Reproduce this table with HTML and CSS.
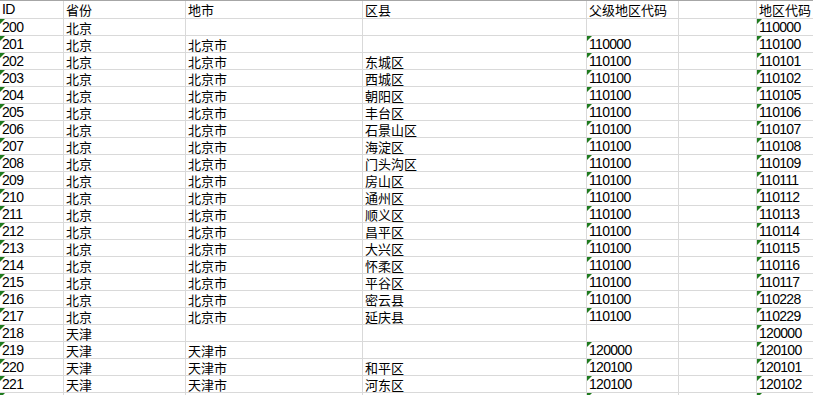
FILE: index.html
```html
<!DOCTYPE html>
<html lang="zh">
<head>
<meta charset="utf-8">
<title>地区代码</title>
<link rel="stylesheet" href="styles.css">
</head>
<body>
<div class="sheet">
  <div class="row head">
    <div class="c">ID</div><div class="c zh">省份</div><div class="c zh">地市</div><div class="c zh">区县</div><div class="c zh">父级地区代码</div><div class="c"></div><div class="c zh">地区代码</div>
  </div>
  <div class="row"><div class="c t">200</div><div class="c zh">北京</div><div class="c zh"></div><div class="c zh"></div><div class="c"></div><div class="c"></div><div class="c t">110000</div></div>
  <div class="row"><div class="c t">201</div><div class="c zh">北京</div><div class="c zh">北京市</div><div class="c zh"></div><div class="c t">110000</div><div class="c"></div><div class="c t">110100</div></div>
  <div class="row"><div class="c t">202</div><div class="c zh">北京</div><div class="c zh">北京市</div><div class="c zh">东城区</div><div class="c t">110100</div><div class="c"></div><div class="c t">110101</div></div>
  <div class="row"><div class="c t">203</div><div class="c zh">北京</div><div class="c zh">北京市</div><div class="c zh">西城区</div><div class="c t">110100</div><div class="c"></div><div class="c t">110102</div></div>
  <div class="row"><div class="c t">204</div><div class="c zh">北京</div><div class="c zh">北京市</div><div class="c zh">朝阳区</div><div class="c t">110100</div><div class="c"></div><div class="c t">110105</div></div>
  <div class="row"><div class="c t">205</div><div class="c zh">北京</div><div class="c zh">北京市</div><div class="c zh">丰台区</div><div class="c t">110100</div><div class="c"></div><div class="c t">110106</div></div>
  <div class="row"><div class="c t">206</div><div class="c zh">北京</div><div class="c zh">北京市</div><div class="c zh">石景山区</div><div class="c t">110100</div><div class="c"></div><div class="c t">110107</div></div>
  <div class="row"><div class="c t">207</div><div class="c zh">北京</div><div class="c zh">北京市</div><div class="c zh">海淀区</div><div class="c t">110100</div><div class="c"></div><div class="c t">110108</div></div>
  <div class="row"><div class="c t">208</div><div class="c zh">北京</div><div class="c zh">北京市</div><div class="c zh">门头沟区</div><div class="c t">110100</div><div class="c"></div><div class="c t">110109</div></div>
  <div class="row"><div class="c t">209</div><div class="c zh">北京</div><div class="c zh">北京市</div><div class="c zh">房山区</div><div class="c t">110100</div><div class="c"></div><div class="c t">110111</div></div>
  <div class="row"><div class="c t">210</div><div class="c zh">北京</div><div class="c zh">北京市</div><div class="c zh">通州区</div><div class="c t">110100</div><div class="c"></div><div class="c t">110112</div></div>
  <div class="row"><div class="c t">211</div><div class="c zh">北京</div><div class="c zh">北京市</div><div class="c zh">顺义区</div><div class="c t">110100</div><div class="c"></div><div class="c t">110113</div></div>
  <div class="row"><div class="c t">212</div><div class="c zh">北京</div><div class="c zh">北京市</div><div class="c zh">昌平区</div><div class="c t">110100</div><div class="c"></div><div class="c t">110114</div></div>
  <div class="row"><div class="c t">213</div><div class="c zh">北京</div><div class="c zh">北京市</div><div class="c zh">大兴区</div><div class="c t">110100</div><div class="c"></div><div class="c t">110115</div></div>
  <div class="row"><div class="c t">214</div><div class="c zh">北京</div><div class="c zh">北京市</div><div class="c zh">怀柔区</div><div class="c t">110100</div><div class="c"></div><div class="c t">110116</div></div>
  <div class="row"><div class="c t">215</div><div class="c zh">北京</div><div class="c zh">北京市</div><div class="c zh">平谷区</div><div class="c t">110100</div><div class="c"></div><div class="c t">110117</div></div>
  <div class="row"><div class="c t">216</div><div class="c zh">北京</div><div class="c zh">北京市</div><div class="c zh">密云县</div><div class="c t">110100</div><div class="c"></div><div class="c t">110228</div></div>
  <div class="row"><div class="c t">217</div><div class="c zh">北京</div><div class="c zh">北京市</div><div class="c zh">延庆县</div><div class="c t">110100</div><div class="c"></div><div class="c t">110229</div></div>
  <div class="row"><div class="c t">218</div><div class="c zh">天津</div><div class="c zh"></div><div class="c zh"></div><div class="c"></div><div class="c"></div><div class="c t">120000</div></div>
  <div class="row"><div class="c t">219</div><div class="c zh">天津</div><div class="c zh">天津市</div><div class="c zh"></div><div class="c t">120000</div><div class="c"></div><div class="c t">120100</div></div>
  <div class="row"><div class="c t">220</div><div class="c zh">天津</div><div class="c zh">天津市</div><div class="c zh">和平区</div><div class="c t">120100</div><div class="c"></div><div class="c t">120101</div></div>
  <div class="row"><div class="c t">221</div><div class="c zh">天津</div><div class="c zh">天津市</div><div class="c zh">河东区</div><div class="c t">120100</div><div class="c"></div><div class="c t">120102</div></div>
  <div class="row"><div class="c t">222</div><div class="c zh">天津</div><div class="c zh">天津市</div><div class="c zh">河西区</div><div class="c t">120100</div><div class="c"></div><div class="c t">120103</div></div>
</div>
</body>
</html>
```
FILE: styles.css
```css
html, body {
  margin: 0;
  background: #fff;
  overflow: hidden;
}

.sheet {
  border-top: 1px solid #a6a6a6;
  font-family: "Liberation Sans", Arial, sans-serif;
  font-size: 14px;
  letter-spacing: -0.7px;
  color: #000;
}

.row {
  display: grid;
  grid-template-columns: 64px 122px 177px 224px 92px 78px 80px;
  height: 17px;
  box-sizing: border-box;
  border-bottom: 1px solid #d9d9d9;
}

.row.head {
  height: 18px;
}

.c {
  position: relative;
  box-sizing: border-box;
  border-right: 1px solid #d9d9d9;
  padding-left: 2px;
  line-height: 16px;
  white-space: nowrap;
}

.head .c {
  line-height: 17px;
}

.zh {
  font-family: "Noto Sans CJK SC", sans-serif;
  font-size: 13px;
  letter-spacing: 0;
  line-height: 15px;
  padding-top: 1px;
}

.head .zh {
  line-height: 16px;
}

.t::before {
  content: "";
  position: absolute;
  left: 0;
  top: 0;
  border-top: 5px solid #1e7b1e;
  border-right: 5px solid transparent;
}
```
